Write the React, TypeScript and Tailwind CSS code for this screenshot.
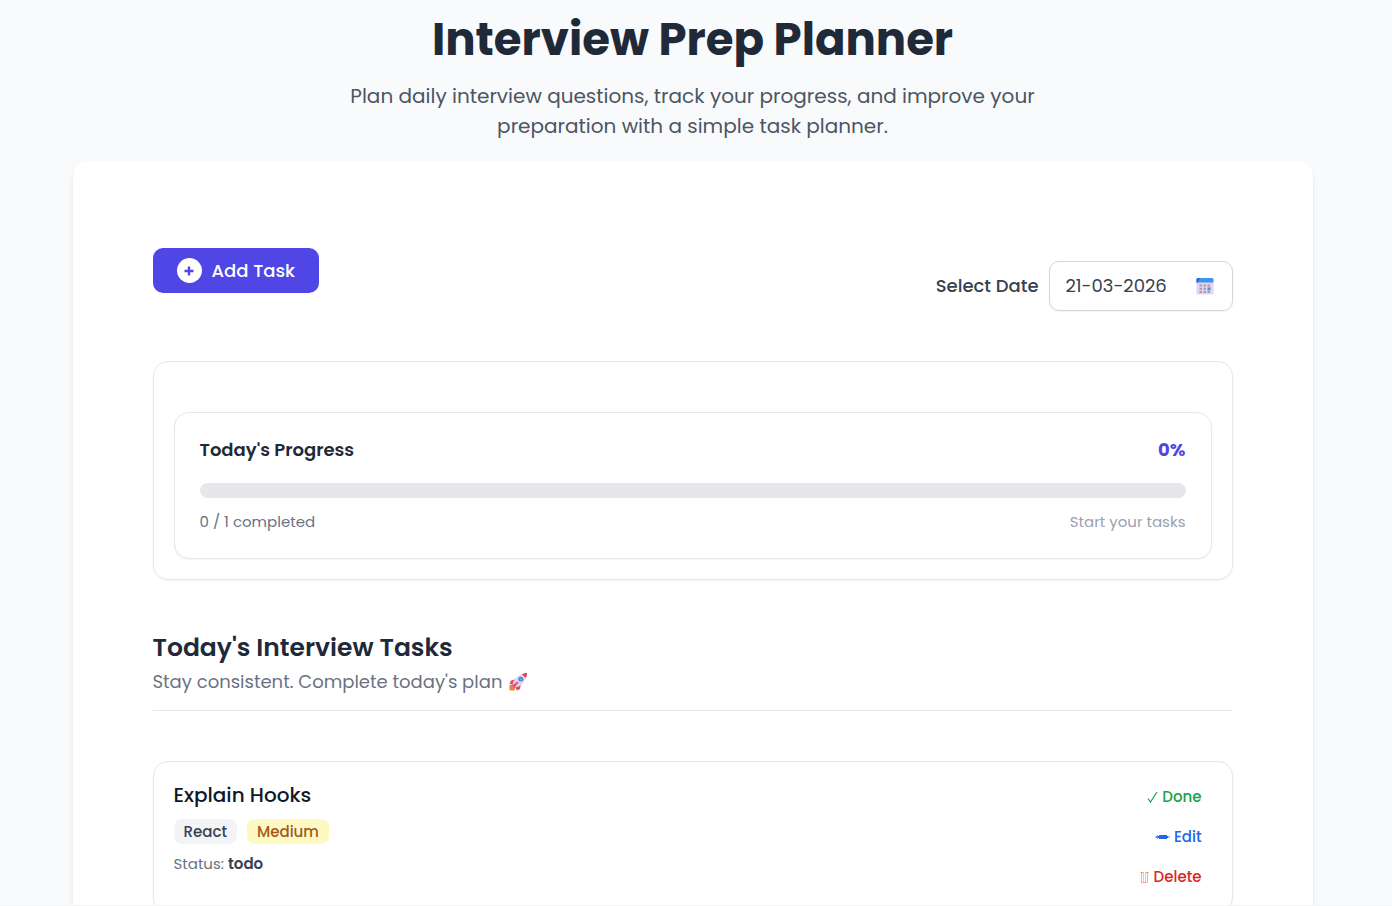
import { useState } from "react";

type Task = {
  id: number;
  title: string;
  topic: string;
  level: string;
  status: "todo" | "done";
};

function CalendarIcon() {
  return (
    <svg className="w-[18px] h-[18px]" viewBox="0 0 18 18" aria-hidden="true">
      <rect x="0.5" y="1" width="17" height="16.5" rx="1.5" fill="#e3d3f0" />
      <path d="M0.5 5.5V2.5A1.5 1.5 0 0 1 2 1h14a1.5 1.5 0 0 1 1.500 1.500v3z" fill="#3d96ec" />
      <path d="M0.5 5.5V2.5A1.5 1.5 0 0 1 2 1h2L2 5.500z" fill="#2366e0" />
      <g fill="#a3a0ab">
        <rect x="3.5" y="7.5" width="2.5" height="2" />
        <rect x="7.5" y="7.5" width="2.5" height="2" />
        <rect x="11.5" y="7.5" width="2.5" height="2" />
        <rect x="3.5" y="10.8" width="2.5" height="2" />
        <rect x="7.5" y="10.8" width="2.5" height="2" />
        <rect x="3.5" y="14" width="2.5" height="2" />
        <rect x="7.5" y="14" width="2.5" height="2" />
        <rect x="11.5" y="14" width="2.5" height="2" />
      </g>
      <rect x="11.5" y="10.4" width="3" height="3" fill="#3d96ec" />
    </svg>
  );
}

function RocketIcon() {
  return (
    <svg className="w-5 h-5" viewBox="0 0 20 20" aria-hidden="true">
      <path d="M1.500 13L5 12.500 7.500 15 6.500 18.500H1.500z" fill="#d98b3f" />
      <path d="M8.500 7L3 8.500 1.500 11.500 5 13zM13 11.500L12 17 9 18.500 7 15z" fill="#e8486f" />
      <path d="M4.500 12.500C5.500 8 9 3.500 14.500 2L18 5.500C16.500 10.500 12.500 14.500 7.500 15.500z" fill="#dcd6ea" />
      <path d="M14 2.200C15.700 1.300 17.500 1 19 1c0 1.500-.3 3.300-1.200 5z" fill="#e23c4f" />
      <circle cx="12.800" cy="7.200" r="2.400" fill="#3f7fd0" />
      <circle cx="12.800" cy="7.200" r="1.300" fill="#5fb0f4" />
      <path d="M4 13.500L9.500 9.500l1 1-4 5.500z" fill="#ee4f7b" />
    </svg>
  );
}

export default function App() {
  const [date, setDate] = useState("21-03-2026");
  const [tasks, setTasks] = useState<Task[]>([
    { id: 1, title: "Explain Hooks", topic: "React", level: "Medium", status: "todo" },
  ]);

  const done = tasks.filter((t) => t.status === "done").length;
  const percent = tasks.length ? Math.round((done / tasks.length) * 100) : 0;

  const markDone = (id: number) =>
    setTasks(tasks.map((t) => (t.id === id ? { ...t, status: "done" } : t)));

  return (
    <div className="h-screen overflow-y-auto [scrollbar-width:none] bg-[#f9fafc] border-b border-gray-100 pr-[7px] font-['Poppins','Inter',sans-serif] text-gray-800">
      <header className="pt-[15px] px-5 text-center">
        <h1 className="text-[45px] leading-[50px] font-bold text-[#1f2937]">Interview Prep Planner</h1>
        <p className="mt-4 mx-auto max-w-[720px] text-[20px] leading-[30px] text-[#4b5563]">
          Plan daily interview questions, track your progress, and improve your preparation with a simple task planner.
        </p>
      </header>

      <main className="mt-5 mx-auto w-[calc(100%-145px)] max-w-[1240px] rounded-[15px] bg-white shadow-md px-20 pt-[87px] pb-20">
        <div className="flex items-start justify-between">
          <button
            type="button"
            className="flex items-center gap-2.5 h-[45px] px-6 rounded-[10px] bg-[#4f46e5] text-white text-[18px] font-medium whitespace-nowrap"
          >
            <span className="flex items-center justify-center w-[25px] h-[25px] rounded-full bg-white">
              <svg className="w-[10px] h-[10px]" viewBox="0 0 10 10" stroke="#4f46e5" strokeWidth={2.4} aria-hidden="true">
                <path d="M5 0.500v9M0.500 5h9" />
              </svg>
            </span>
            Add Task
          </button>

          <div className="mt-[13px] flex items-center gap-2.5">
            <label htmlFor="date" className="pb-0.5 text-[18px] font-medium text-[#374151]">
              Select Date
            </label>
            <div className="flex items-center justify-between w-[184px] h-[50px] pl-4 pr-[18px] rounded-[10px] border border-gray-300 bg-white shadow-xs">
              <input
                id="date"
                value={date}
                onChange={(e) => setDate(e.target.value)}
                className="w-[115px] pb-0.5 text-[18px] text-[#374151] outline-none"
              />
              <button type="button" aria-label="Open calendar">
                <CalendarIcon />
              </button>
            </div>
          </div>
        </div>

        {/* Progress */}
        <section className="mt-[50px] px-5 pt-[50px] pb-5 rounded-[15px] border border-gray-200 shadow-xs">
          <div className="p-[25px] rounded-[15px] border border-gray-200 bg-white shadow-xs">
            <div className="flex items-center justify-between text-[18px] leading-[23px]">
              <h2 className="font-semibold">Today's Progress</h2>
              <span className="font-bold text-[#4f46e5]">{percent}%</span>
            </div>
            <div className="mt-[22px] h-[15px] rounded-full bg-gray-200 overflow-hidden">
              <div className="h-full bg-[#4f46e5]" style={{ width: `${percent}%` }} />
            </div>
            <div className="mt-3 flex items-center justify-between text-[15px] leading-[23px]">
              <span className="text-gray-500">
                {done} / {tasks.length} completed
              </span>
              <span className="text-gray-400">Start your tasks</span>
            </div>
          </div>
        </section>

        {/* Task list */}
        <div className="mt-[50px] pb-[15px] border-b border-gray-200">
          <h2 className="text-[25px] leading-[35px] font-semibold">Today's Interview Tasks</h2>
          <p className="mt-1 flex items-center gap-1.5 text-[18px] leading-[26px] text-gray-500">
            Stay consistent. Complete today's plan <RocketIcon />
          </p>
        </div>

        {tasks.map((t) => (
          <article
            key={t.id}
            className="mt-[50px] flex justify-between p-5 rounded-[15px] border border-gray-200 bg-white shadow-xs"
          >
            <div>
              <h3 className="text-[20px] leading-[27px] font-medium text-gray-900">{t.title}</h3>
              <div className="mt-2.5 flex gap-2.5 text-[15px] leading-[25px] font-medium">
                <span className="px-2.5 rounded-lg bg-gray-100 text-gray-700">{t.topic}</span>
                <span className="px-2.5 rounded-lg bg-[#fef9c3] text-[#a05a1c]">{t.level}</span>
              </div>
              <p className="mt-2 text-[15px] leading-[23px] text-gray-500">
                Status: <span className="font-semibold text-gray-700">{t.status}</span>
              </p>
            </div>

            <div className="flex flex-col items-end gap-2.5 text-[15px] leading-[20px] font-medium">
              <button
                type="button"
                onClick={() => markDone(t.id)}
                className="flex items-center gap-1 px-2.5 py-[5px] text-[#16a34a]"
              >
                <svg className="w-[11px] h-3" viewBox="0 0 11 12" fill="none" stroke="currentColor" strokeWidth={1.2} aria-hidden="true">
                  <path d="M1 7.500L3.500 11 10 1" />
                </svg>
                Done
              </button>
              <button type="button" className="flex items-center gap-1 px-2.5 py-[5px] text-[#2563eb]">
                <svg className="w-[15px] h-1.5" viewBox="0 0 15 6" fill="currentColor" aria-hidden="true">
                  <path d="M0 3L3 1v4z" opacity="0.8" />
                  <rect x="4" y="1" width="8" height="4" />
                  <rect x="3" y="2" width="10" height="2" />
                  <circle cx="14" cy="3" r="1" opacity="0.5" />
                </svg>
                Edit
              </button>
              <button type="button" className="flex items-center gap-[5px] px-2.5 py-[5px] text-[#dc2626]">
                <svg className="w-[9px] h-3" viewBox="0 0 9 12" fill="none" aria-hidden="true">
                  <path d="M1.500 1v10.500h6V1" stroke="#e3b3a0" />
                  <path d="M3.500 2v9M5.500 2v9" stroke="#dfc3dc" />
                  <path d="M0.500 1.500h3M5.500 1.500h3" stroke="#dd9a6c" />
                </svg>
                Delete
              </button>
            </div>
          </article>
        ))}
      </main>
    </div>
  );
}
